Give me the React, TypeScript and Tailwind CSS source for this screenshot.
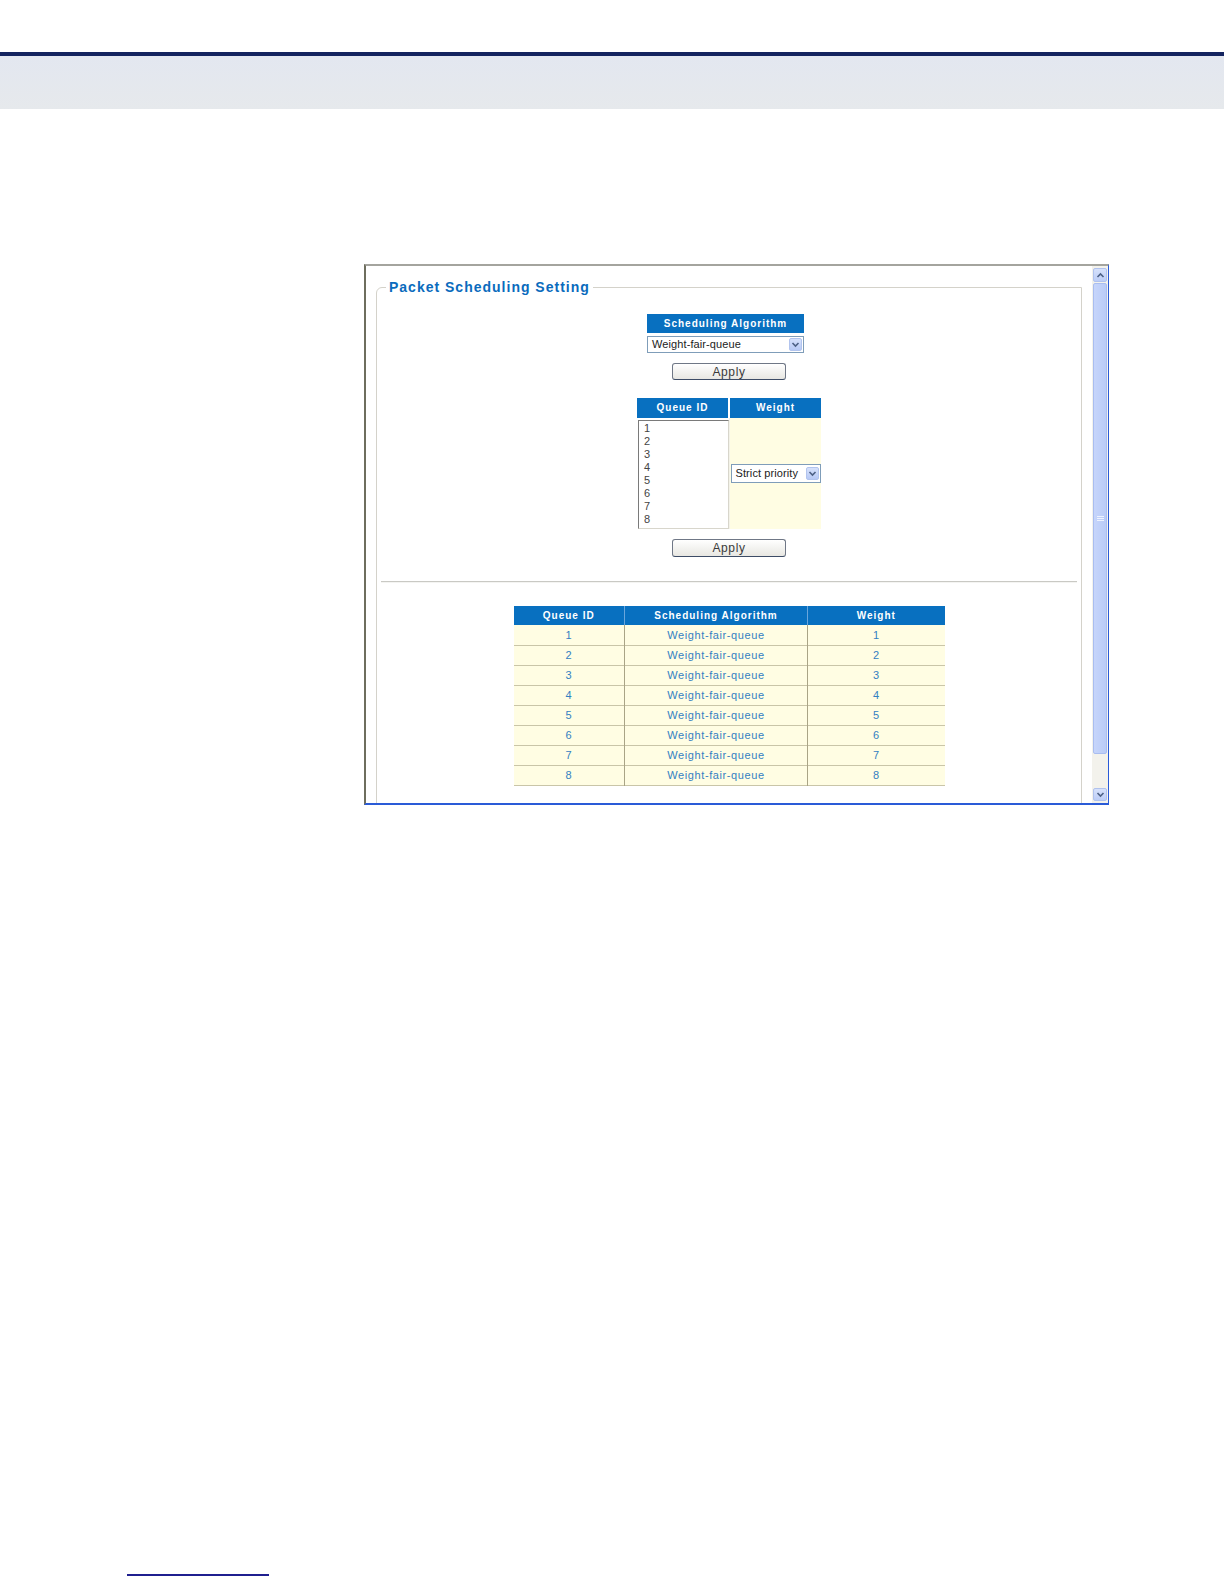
import React from "react";

const rows = [1, 2, 3, 4, 5, 6, 7, 8];

function Chevron({ up = false }: { up?: boolean }) {
  return (
    <svg width="9" height="7" viewBox="0 0 9 7" className="block">
      <path
        d={up ? "M1.5 5 L4.5 2 L7.5 5" : "M1.5 2 L4.5 5 L7.5 2"}
        fill="none"
        stroke="#4d6185"
        strokeWidth="1.6"
      />
    </svg>
  );
}

function XpSelect({ text, w, h }: { text: string; w: string; h: string }) {
  return (
    <div
      className={`${w} ${h} flex items-center justify-between border border-[#7f9db9] bg-white pl-[4px] pr-[1px]`}
    >
      <span className="text-[11px] leading-none tracking-[0.1px] text-[#222]">{text}</span>
      <span className="w-[13px] h-[13px] rounded-[2px] bg-gradient-to-b from-[#d6e1fb] to-[#b7c9f5] border border-[#b2c4ee] flex items-center justify-center">
        <Chevron />
      </span>
    </div>
  );
}

function XpButton({ h }: { h: string }) {
  return (
    <div
      className={`w-[114px] ${h} rounded-[3px] border border-[#6f7786] border-b-[#3d4c66] bg-gradient-to-b from-white to-[#e8e7e2] flex items-center justify-center`}
    >
      <span className="text-[12px] leading-none tracking-[0.6px] text-[#3a3a3a]">Apply</span>
    </div>
  );
}

export default function App() {
  return (
    <div className="w-[1224px] h-[1584px] bg-white overflow-hidden font-['Liberation_Sans',Arial,sans-serif]">
      <div className="mt-[52px] h-[4px] bg-[#13235f]" />
      <div className="h-[53px] bg-gradient-to-b from-[#e3e7f0] to-[#e6e9ec]" />

      {/* screenshot frame */}
      <div className="ml-[364px] mt-[155px] w-[745px] h-[541px] flex border-t-2 border-t-[#a4a49e] border-l-2 border-l-[#6e6e5e] border-b-2 border-b-[#2a5bd7] border-r border-r-[#2a5bd7]">
        <div className="flex-1 overflow-hidden bg-white">
          <fieldset className="mt-[12px] mx-[10px] pb-[60px] border border-[#d4d2ca] rounded-tl-[6px] flex flex-col items-center">
            <legend className="ml-[9px] px-[3px] text-[14px] leading-[18px] font-bold tracking-[1px] text-[#0a6bbd]">
              Packet Scheduling Setting
            </legend>

            {/* scheduling algorithm */}
            <div className="mt-[18px] mr-[7px] w-[157px] flex flex-col">
              <div className="h-[19px] bg-[#0870c0] text-white text-[10px] font-bold tracking-[1px] leading-[19px] text-center">
                Scheduling Algorithm
              </div>
              <div className="mt-[3px] flex">
                <XpSelect text="Weight-fair-queue" w="w-[157px]" h="h-[17px]" />
              </div>
            </div>
            <div className="mt-[10px]">
              <XpButton h="h-[17px]" />
            </div>

            {/* queue / weight */}
            <div className="mt-[18px] w-[184px] flex flex-col">
              <div className="flex gap-[2px] h-[20px]">
                <div className="w-[91px] bg-[#0870c0] text-white text-[10px] font-bold tracking-[1px] leading-[20px] text-center">
                  Queue ID
                </div>
                <div className="w-[91px] bg-[#0870c0] text-white text-[10px] font-bold tracking-[1px] leading-[20px] text-center">
                  Weight
                </div>
              </div>
              <div className="flex gap-[1px] h-[111px] bg-[#f4f3e8]">
                <div className="w-[92px] bg-white pl-[1px] pt-[2px]">
                  <div className="w-[91px] h-[109px] border border-t-[#7a7a7a] border-l-[#7a7a7a] border-b-[#d8d6cc] border-r-[#d8d6cc] bg-white pl-[5px] pt-[1px]">
                    {rows.map((r) => (
                      <div key={r} className="text-[11px] leading-[13px] text-[#444]">
                        {r}
                      </div>
                    ))}
                  </div>
                </div>
                <div className="w-[91px] bg-[#fffde3] flex items-center justify-center">
                  <XpSelect text="Strict priority" w="w-[90px]" h="h-[19px]" />
                </div>
              </div>
            </div>
            <div className="mt-[10px]">
              <XpButton h="h-[18px]" />
            </div>

            {/* divider */}
            <div className="mt-[24px] self-stretch mx-[4px] h-[2px] border-t border-t-[#c9c9c4] border-b border-b-[#f4f4f2]" />

            {/* results table */}
            <table className="mt-[23px] w-[431px] border-collapse text-center">
              <thead>
                <tr className="h-[19px] bg-[#0870c0] text-white text-[10px] font-bold tracking-[1px]">
                  <th className="w-[111px] p-0 border-r border-r-[#6aa6dc] font-bold">Queue ID</th>
                  <th className="w-[183px] p-0 border-r border-r-[#6aa6dc] font-bold">Scheduling Algorithm</th>
                  <th className="w-[137px] p-0 font-bold">Weight</th>
                </tr>
              </thead>
              <tbody>
                {rows.map((r) => (
                  <tr
                    key={r}
                    className="h-[20px] bg-[#fffde3] text-[11px] tracking-[0.6px] text-[#3380c2] border-b border-b-[#c9c5a8]"
                  >
                    <td className="p-0 border-r border-r-[#a9a486]">{r}</td>
                    <td className="p-0 border-r border-r-[#a9a486]">Weight-fair-queue</td>
                    <td className="p-0">{r}</td>
                  </tr>
                ))}
              </tbody>
            </table>
          </fieldset>
        </div>

        {/* scrollbar */}
        <div className="w-[16px] bg-[#f3f2ec] pt-[2px] pb-[2px] flex flex-col px-[1px]">
          <div className="h-[14px] rounded-[2px] bg-gradient-to-b from-[#d6e1fb] to-[#bccdf7] border border-[#b0c2ee] flex items-center justify-center">
            <Chevron up />
          </div>
          <div className="mt-[1px] h-[471px] rounded-[2px] bg-gradient-to-r from-[#c6d5fb] to-[#b9cbf7] border border-[#a9bdf0] flex items-center justify-center">
            <div className="flex flex-col gap-[1px]">
              <div className="w-[7px] h-[1px] bg-[#eef3ff]" />
              <div className="w-[7px] h-[1px] bg-[#eef3ff]" />
              <div className="w-[7px] h-[1px] bg-[#eef3ff]" />
            </div>
          </div>
          <div className="flex-1" />
          <div className="h-[13px] rounded-[2px] bg-gradient-to-b from-[#d6e1fb] to-[#bccdf7] border border-[#b0c2ee] flex items-center justify-center">
            <Chevron />
          </div>
        </div>
      </div>

      <div className="mt-[769px] ml-[127px] w-[142px] h-[2px] bg-[#1f1f8f]" />
    </div>
  );
}
